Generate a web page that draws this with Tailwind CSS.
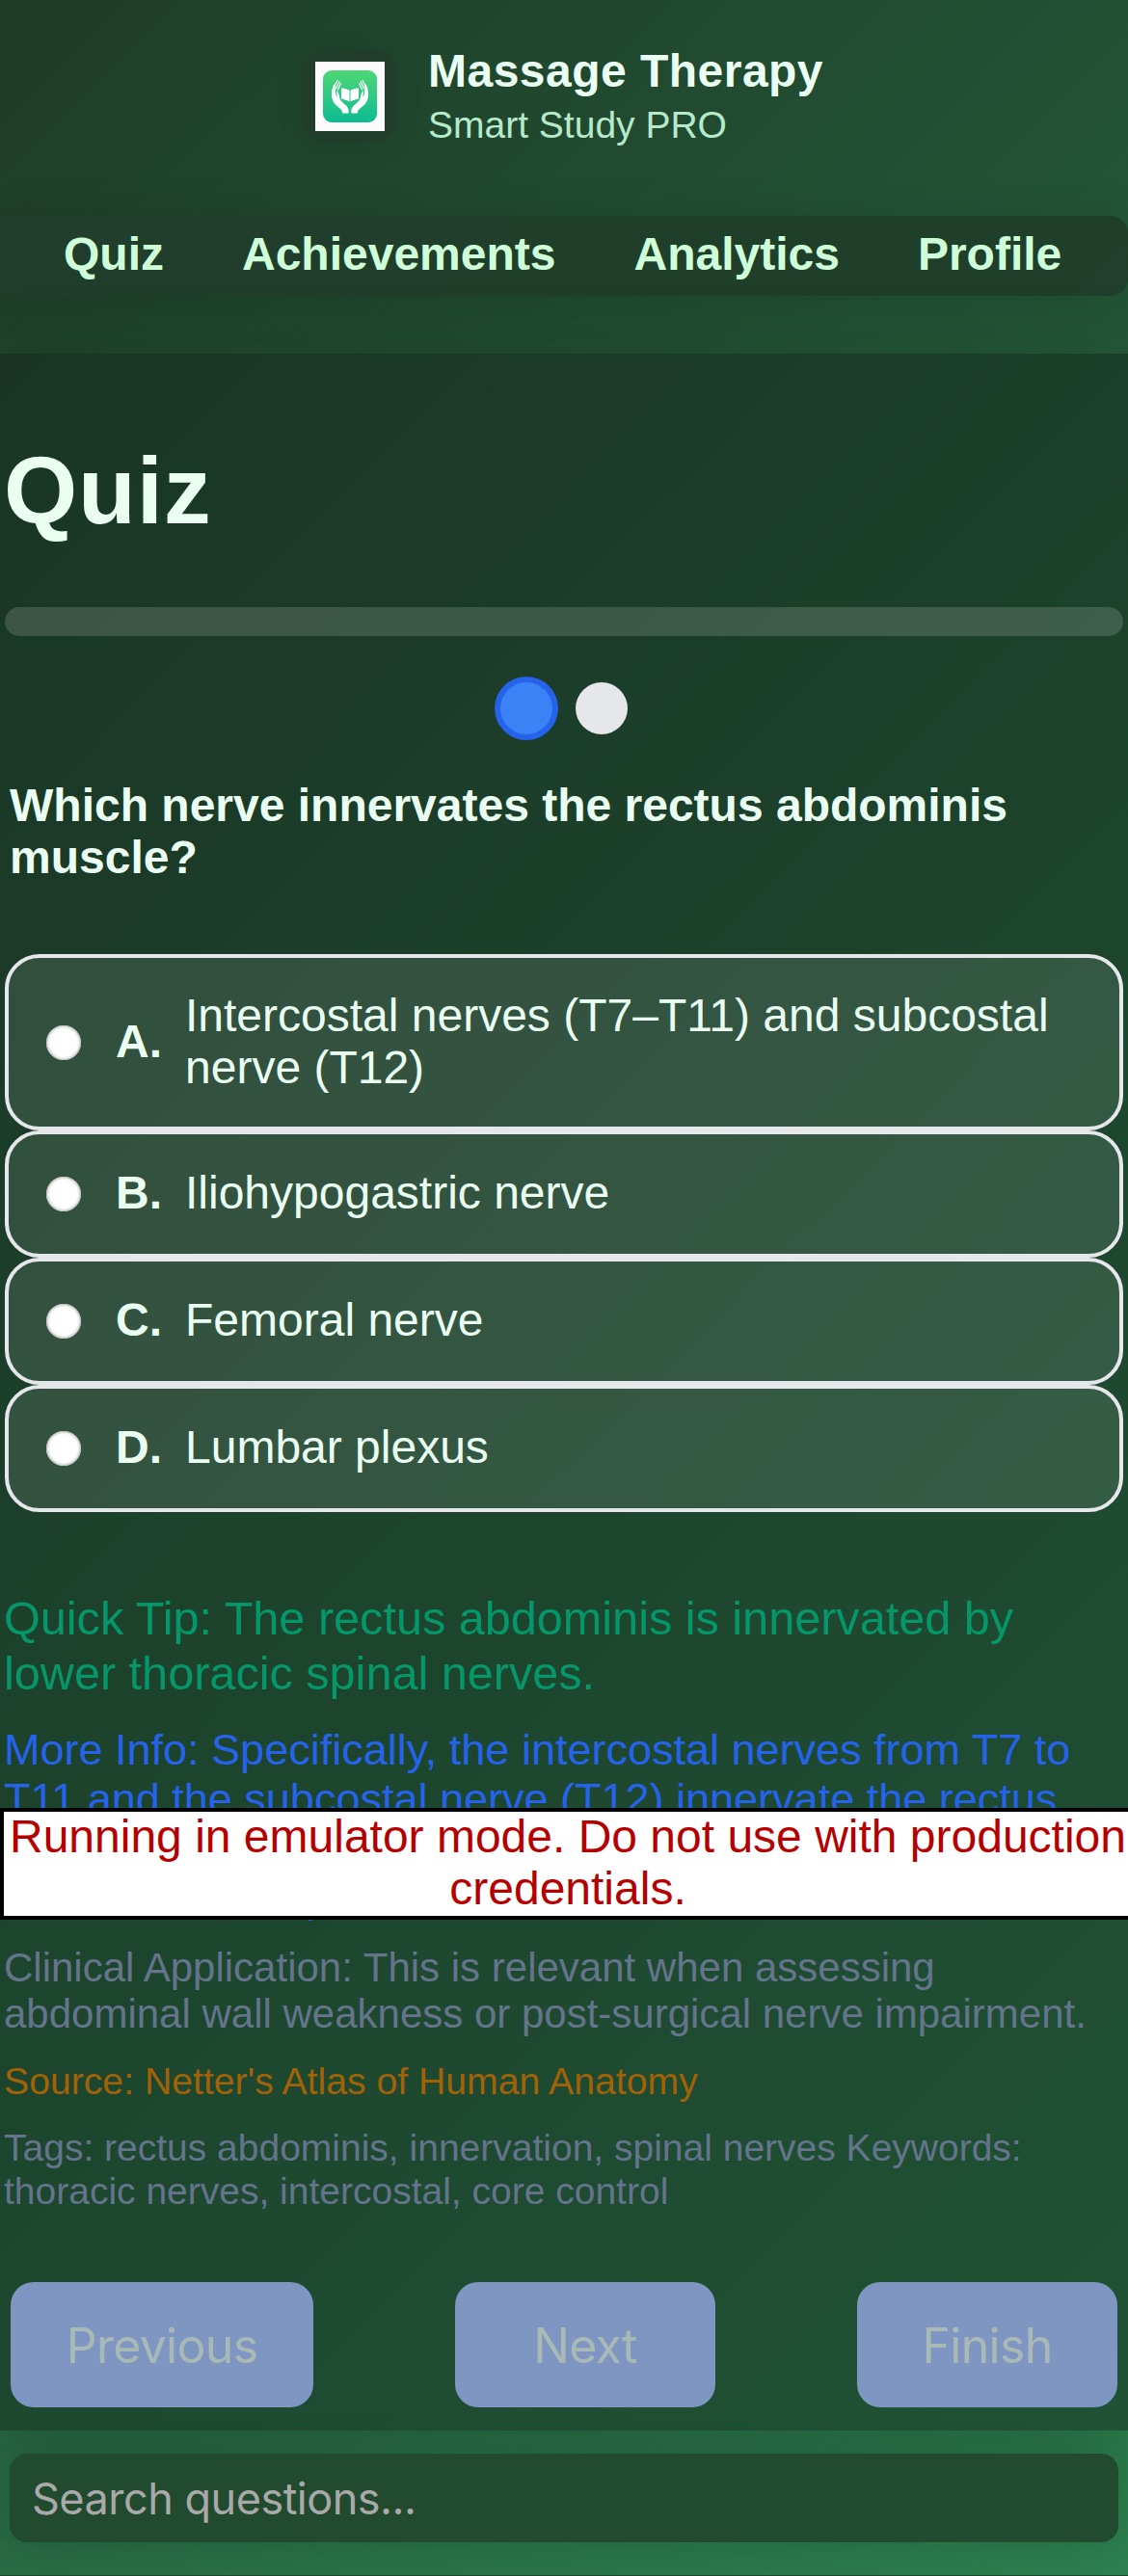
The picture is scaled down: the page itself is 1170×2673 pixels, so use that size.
<!DOCTYPE html>
<html lang="en">
<head>
<meta charset="utf-8">
<title>Massage Therapy Smart Study PRO</title>
<script src="https://cdn.jsdelivr.net/npm/@tailwindcss/browser@4"></script>
</head>
<body class="relative w-[1170px] h-[2673px] overflow-hidden flex flex-col bg-[linear-gradient(135deg,#1e3c28,#2d804f)] font-['Liberation_Sans',Arial,sans-serif] text-[48px] leading-[54px] text-[#eafff2]">

  <header class="h-[367px] shrink-0">
    <div class="flex h-[224px] pt-[46px] pl-[315px]">
      <div class="mt-[6px] size-24 rounded-3xl bg-[#213d2b] p-3 shadow-[0_6px_30px_rgba(0,0,0,0.08)]">
        <svg class="block size-[72px]" viewBox="0 0 72 72">
          <defs><linearGradient id="g" x1="0" y1="0" x2="0" y2="1"><stop offset="0" stop-color="#4fd675"/><stop offset="1" stop-color="#0dbb92"/></linearGradient></defs>
          <rect width="72" height="72" fill="#fafbfa"/>
          <rect x="8" y="9" width="56" height="54" rx="9" fill="url(#g)"/>
          <g id="hand" fill="#fff">
            <path d="M20 23C17.800 26 16.800 30 17 35C17.300 42 21.500 45.500 25.500 48.500C27.800 50.200 28 51 28.200 53.500H34.600C35 48.500 33.500 46.500 30 43.800C27.200 41.500 25.500 39.500 25 36.500C24.600 33.500 23.500 31 22.300 30C21.700 31.500 22.400 34 23 37C21.300 35 20.300 31.500 21 28.500Z"/>
            <path d="M23 19.500L19.600 26M24.900 20.800L21.600 27.500M26.400 22.800L23.400 29" stroke="#fff" stroke-width="1.300" stroke-linecap="round"/>
            <path d="M27 27.500C30 27.300 33 28.300 35.500 29.800V41.500C33 40.200 30 39.200 27 38.600Z"/>
          </g>
          <use href="#hand" transform="translate(72 0) scale(-1 1)"/>
        </svg>
      </div>
      <div class="ml-[33px]">
        <div class="pt-px font-bold tracking-[0.48px] whitespace-nowrap">Massage Therapy</div>
        <div class="mt-[6px] text-[39px] leading-[45px] text-[#b7e9cb] whitespace-nowrap">Smart Study PRO</div>
      </div>
    </div>
    <nav class="flex h-[83px] gap-[81px] rounded-r-[18px] bg-[#213e2b]/95 pl-[66px] pt-[13px] font-bold text-[#ceffd8] shadow-[0_6px_48px_rgba(0,0,0,0.12)]">
      <a>Quiz</a><a>Achievements</a><a>Analytics</a><a>Profile</a>
    </nav>
  </header>

  <main class="relative h-[2155px] shrink-0 bg-[#14281e]/50 px-[5px] shadow-[0_24px_96px_rgba(0,0,0,0.2)]">
    <h1 class="-ml-px pt-[88px] text-[98px] leading-[108px] font-bold tracking-[0.8px]">Quiz</h1>
    <div class="mt-[67px] h-[30px] rounded-[15px] bg-white/15"></div>
    <div class="mt-12 flex justify-center gap-6">
      <span class="size-[54px] rounded-full bg-[#3b82f6] ring-[6px] ring-[#2563eb]"></span>
      <span class="size-[54px] rounded-full bg-[#e5e7eb]"></span>
    </div>
    <p class="mt-[47px] pl-[5px] font-bold">Which nerve innervates the rectus abdominis<br>muscle?</p>

    <div class="mt-[73px] flex flex-col">
      <label class="flex h-[183px] items-center rounded-[36px] border-4 border-[#e5e7eb] bg-white/10 pl-[39px]"><i class="size-9 rounded-full bg-white shadow-[inset_0_0_3px_1px_#aaa]"></i><b class="ml-9 w-[72px] pb-[2px]">A.</b><span class="pb-[2px]">Intercostal nerves (T7–T11) and subcostal<br>nerve (T12)</span></label>
      <label class="flex h-[132px] items-center rounded-[36px] border-4 border-[#e5e7eb] bg-white/10 pl-[39px]"><i class="size-9 rounded-full bg-white shadow-[inset_0_0_3px_1px_#aaa]"></i><b class="ml-9 w-[72px] pb-[2px]">B.</b><span class="pb-[2px]">Iliohypogastric nerve</span></label>
      <label class="flex h-[132px] items-center rounded-[36px] border-4 border-[#e5e7eb] bg-white/10 pl-[39px]"><i class="size-9 rounded-full bg-white shadow-[inset_0_0_3px_1px_#aaa]"></i><b class="ml-9 w-[72px] pb-[2px]">C.</b><span class="pb-[2px]">Femoral nerve</span></label>
      <label class="flex h-[132px] items-center rounded-[36px] border-4 border-[#e5e7eb] bg-white/10 pl-[39px]"><i class="size-9 rounded-full bg-white shadow-[inset_0_0_3px_1px_#aaa]"></i><b class="ml-9 w-[72px] pb-[2px]">D.</b><span class="pb-[2px]">Lumbar plexus</span></label>
    </div>

    <section class="-ml-px pt-[82px] whitespace-nowrap">
      <p class="text-[48.600px] leading-[57px] text-[#059669]">Quick Tip: The rectus abdominis is innervated by<br>lower thoracic spinal nerves.</p>
      <p class="mt-[25px] text-[45px] leading-[51px] text-[#2563eb]">More Info: Specifically, the intercostal nerves from T7 to<br>T11 and the subcostal nerve (T12) innervate the rectus<br>abdominis muscle, assisting trunk flexion,<br>rotation and respiration.</p>
      <p class="mt-[24px] text-[42px] leading-[48px] text-[#64748b]">Clinical Application: This is relevant when assessing<br>abdominal wall weakness or post-surgical nerve impairment.</p>
      <p class="mt-[23px] text-[39.200px] leading-[45px] text-[#a16207]">Source: Netter's Atlas of Human Anatomy</p>
      <p class="mt-[24px] text-[39px] leading-[45px] text-[#64748b]">Tags: rectus abdominis, innervation, spinal nerves Keywords:<br>thoracic nerves, intercostal, core control</p>
    </section>

    <div class="absolute inset-x-[11px] top-[2001px] flex justify-between font-[Inter,sans-serif] text-[50px] tracking-[-0.7px] text-[#a9b9b5]">
      <button class="h-[130px] w-[314px] rounded-3xl bg-[#7f96c3] pt-[2px]">Previous</button>
      <button class="h-[130px] w-[270px] rounded-3xl bg-[#7f96c3] pt-[2px]">Next</button>
      <button class="h-[130px] w-[270px] rounded-3xl bg-[#7f96c3] pt-[2px]">Finish</button>
    </div>
  </main>

  <div class="relative mx-[10px] mt-6 flex h-[92px] shrink-0 items-center rounded-[18px] bg-[#224a2f] pl-[23px] font-[Inter,sans-serif] text-[45px] tracking-[-0.5px] text-[#a9a9a9] shadow-[0_6px_48px_rgba(0,0,0,0.12)]"><span class="pt-px">Search questions...</span></div>
  <div class="absolute inset-x-0 bottom-0 h-px bg-[#1f4430]"></div>

  <div class="absolute left-0 top-[1876px] h-[116px] w-[1178px] border-4 border-black bg-white text-center leading-[54px] text-[#b50000] whitespace-nowrap"><p class="-mt-px">Running in emulator mode. Do not use with production<br>credentials.</p></div>
</body>
</html>
